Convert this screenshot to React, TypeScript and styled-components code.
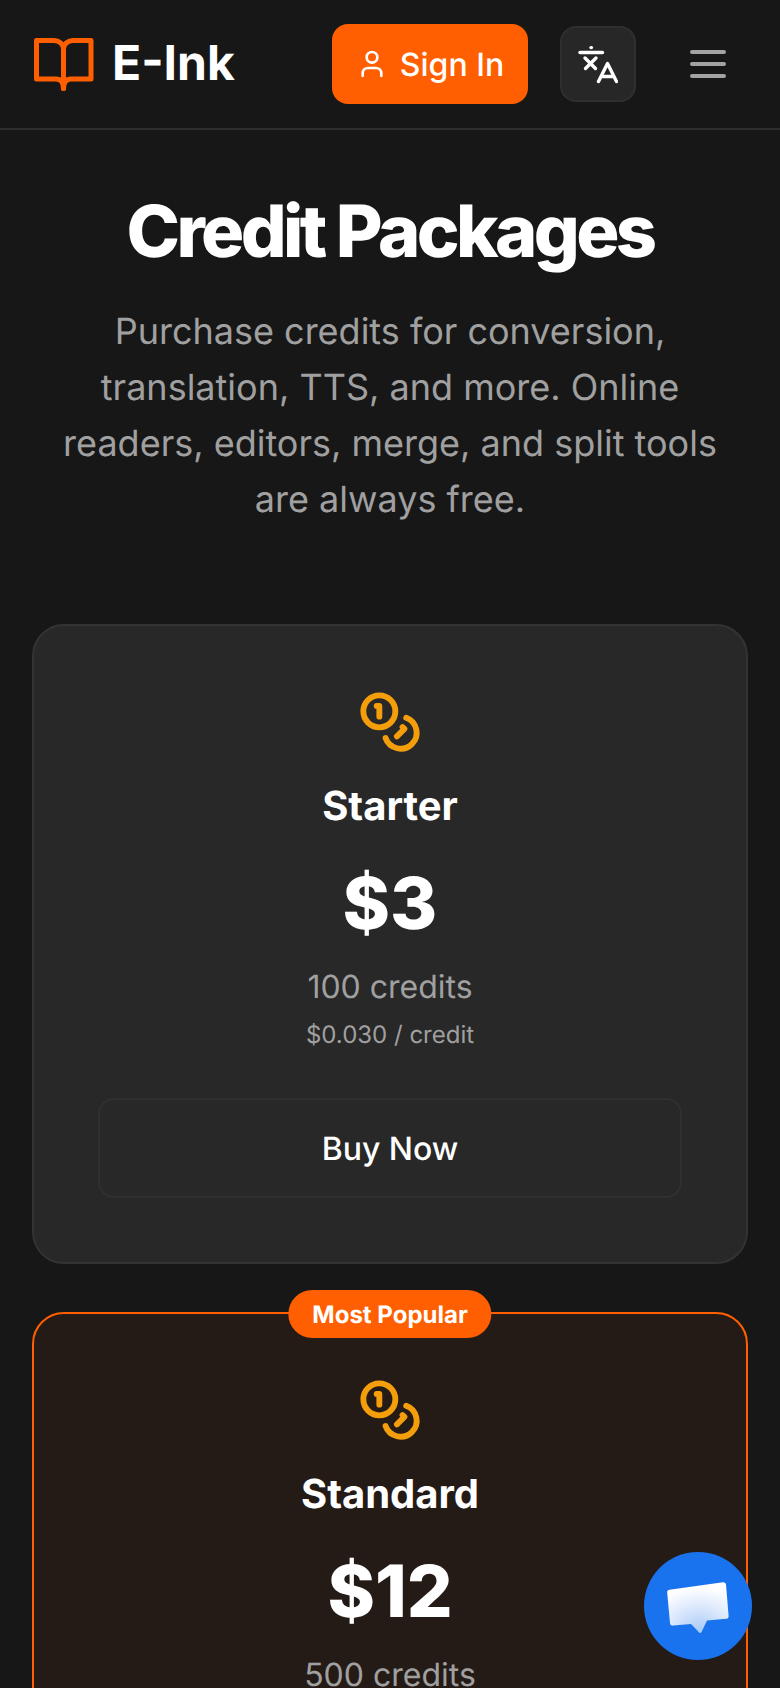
import React from "react";
import styled, { createGlobalStyle } from "styled-components";
import { Coins, User } from "lucide-react";

const ORANGE = "#ff5f00";

const GlobalStyle = createGlobalStyle`
  html, body {
    margin: 0;
    padding: 0;
    background: #171717;
    height: 1688px;
    overflow: hidden;
  }
  * { box-sizing: border-box; }
  body {
    font-family: Inter, "Liberation Sans", sans-serif;
    text-rendering: geometricPrecision;
  }
  button { text-rendering: geometricPrecision; }
`;

interface PackageInfo {
  name: string;
  price: string;
  credits: string;
  unit?: string;
  popular?: boolean;
}

const packages: PackageInfo[] = [
  { name: "Starter", price: "$3", credits: "100 credits", unit: "$0.030 / credit" },
  { name: "Standard", price: "$12", credits: "500 credits", unit: "$0.024 / credit", popular: true },
];

function BookLogo() {
  return (
    <svg width="60" height="54" viewBox="0 0 60 54" fill="none">
      <path
        d="M2.5 2.5H20C25 2.5 29.5 6 29.5 11C29.5 6 34 2.5 39 2.5H57V41H37C32.5 41 29.5 44 29.5 50.5C29.5 44 26.5 41 22 41H2.5Z"
        stroke={ORANGE}
        strokeWidth="5"
        strokeLinejoin="round"
      />
      <path d="M29.5 11V50.5" stroke={ORANGE} strokeWidth="5" strokeLinecap="round" />
    </svg>
  );
}

function TranslateIcon() {
  return (
    <svg width="40" height="40" viewBox="0 0 40 40" fill="none" stroke="#fff" strokeWidth="3.4" strokeLinecap="round" strokeLinejoin="round">
      <path d="M2 8.5H24.5" />
      <path d="M13 3.6h.4" />
      <path d="M7 14L17.5 24.5" />
      <path d="M18 14L7.5 24.5" />
      <path d="M20.5 37.5L29.5 19.5L38.5 37.5" />
      <path d="M23.5 32.5H35.5" />
    </svg>
  );
}

function ChatIcon() {
  return (
    <svg width="66" height="56" viewBox="0 0 66 56">
      <defs>
        <radialGradient id="chatFill" cx="0.52" cy="0.95" r="0.85">
          <stop offset="0" stopColor="#a9cbf8" />
          <stop offset="0.55" stopColor="#dbe8fc" />
          <stop offset="1" stopColor="#ffffff" />
        </radialGradient>
      </defs>
      <path
        d="M4.5 11.8L58 4.2C59.6 4 60.8 5 61 6.6L63.6 38C63.8 39.6 62.8 40.6 61.2 40.8L42 42.5L36.4 54.2C35.9 55.2 34.8 55.2 34.2 54.4L26 46L8 47.6C6.4 47.8 5.2 46.8 5 45.2L2.2 14.5C2 13 3 12 4.5 11.8Z"
        fill="url(#chatFill)"
      />
    </svg>
  );
}

export default function App() {
  return (
    <Page>
      <GlobalStyle />
      <Header>
        <Brand>
          <BookLogo />
          <BrandName>E-Ink</BrandName>
        </Brand>
        <Actions>
          <SignIn>
            <User size={32} strokeWidth={2} />
            Sign In
          </SignIn>
          <LangButton aria-label="Language">
            <TranslateIcon />
          </LangButton>
          <MenuButton aria-label="Menu">
            <span />
            <span />
            <span />
          </MenuButton>
        </Actions>
      </Header>
      <Main>
        <Title>Credit Packages</Title>
        <Subtitle>
          Purchase credits for conversion, translation, TTS, and more. Online readers, editors, merge, and split tools are always free.
        </Subtitle>
        <Cards>
          {packages.map((p) => (
            <Card key={p.name} $popular={p.popular}>
              {p.popular && <Badge>Most Popular</Badge>}
              <Coins size={64} color="#f59e0b" strokeWidth={2.2} />
              <PlanName>{p.name}</PlanName>
              <Price>{p.price}</Price>
              <Credits>{p.credits}</Credits>
              <Unit>{p.unit}</Unit>
              <BuyButton>Buy Now</BuyButton>
            </Card>
          ))}
        </Cards>
      </Main>
      <ChatBubble aria-label="Chat">
        <ChatIcon />
      </ChatBubble>
    </Page>
  );
}

const Page = styled.div`
  width: 780px;
  height: 1688px;
  overflow: hidden;
  position: relative;
  background: #171717;
  color: #fff;
`;

const Header = styled.header`
  height: 130px;
  border-bottom: 2px solid #2f2f2f;
  padding: 0 54px 0 34px;
  display: flex;
  align-items: center;
  justify-content: space-between;
`;

const Brand = styled.div`
  display: flex;
  align-items: center;
  gap: 18px;
  margin-top: 1px;
`;

const BrandName = styled.span`
  font-size: 48px;
  font-weight: 700;
  line-height: 56px;
  margin-top: -3px;
`;

const Actions = styled.div`
  display: flex;
  align-items: center;
`;

const SignIn = styled.button`
  width: 196px;
  height: 80px;
  background: ${ORANGE};
  border: 0;
  border-radius: 16px;
  color: #fff;
  font-family: inherit;
  font-size: 32px;
  font-weight: 500;
  display: flex;
  align-items: center;
  justify-content: center;
  gap: 12px;
  padding: 0;
`;

const LangButton = styled.button`
  width: 76px;
  height: 76px;
  margin-left: 32px;
  background: #272727;
  border: 2px solid #2f2f2f;
  border-radius: 16px;
  display: flex;
  align-items: center;
  justify-content: center;
  padding: 0;
`;

const MenuButton = styled.div`
  width: 36px;
  margin-left: 54px;
  display: flex;
  flex-direction: column;
  gap: 8px;

  span {
    display: block;
    height: 4px;
    border-radius: 2px;
    background: #a3a3a3;
  }
`;

const Main = styled.main`
  padding: 62px 32px 0;
  display: flex;
  flex-direction: column;
  align-items: center;
`;

const Title = styled.h1`
  margin: 0;
  font-size: 72px;
  font-weight: 800;
  line-height: 80px;
  letter-spacing: -3.6px;
  text-align: center;
`;

const Subtitle = styled.p`
  margin: 31px 0 0;
  width: 680px;
  font-size: 36px;
  line-height: 56px;
  color: #a0a0a0;
  text-align: center;
`;

const Cards = styled.div`
  width: 100%;
  margin-top: 97px;
  display: flex;
  flex-direction: column;
  gap: 48px;
`;

const Card = styled.section<{ $popular?: boolean }>`
  position: relative;
  height: 640px;
  padding: 64px 64px 0;
  border: 2px solid ${(p) => (p.$popular ? ORANGE : "#333333")};
  border-radius: 32px;
  background: ${(p) => (p.$popular ? "#251b16" : "#282828")};
  display: flex;
  flex-direction: column;
  align-items: center;
`;

const Badge = styled.div`
  position: absolute;
  top: -24px;
  left: 50%;
  transform: translateX(-50%);
  height: 48px;
  padding: 0 24px;
  border-radius: 24px;
  background: ${ORANGE};
  color: #fff;
  font-size: 24px;
  font-weight: 700;
  display: flex;
  align-items: center;
  white-space: nowrap;
`;

const PlanName = styled.h3`
  margin: 24px 0 0;
  font-size: 40px;
  font-weight: 700;
  line-height: 56px;
`;

const Price = styled.div`
  margin-top: 30px;
  font-size: 72px;
  font-weight: 800;
  line-height: 80px;
`;

const Credits = styled.div`
  margin-top: 19px;
  font-size: 32px;
  line-height: 48px;
  color: #a0a0a0;
`;

const Unit = styled.div`
  margin-top: 4px;
  font-size: 24px;
  line-height: 40px;
  color: #a0a0a0;
`;

const BuyButton = styled.button`
  width: 584px;
  height: 100px;
  margin-top: 43px;
  background: transparent;
  border: 2px solid #303030;
  border-radius: 16px;
  color: #fff;
  font-family: inherit;
  font-size: 32px;
  font-weight: 500;
`;

const ChatBubble = styled.button`
  position: absolute;
  left: 644px;
  top: 1552px;
  width: 108px;
  height: 108px;
  border: 0;
  border-radius: 50%;
  background: #1a73ee;
  display: flex;
  align-items: center;
  justify-content: center;
  padding: 0;
`;
